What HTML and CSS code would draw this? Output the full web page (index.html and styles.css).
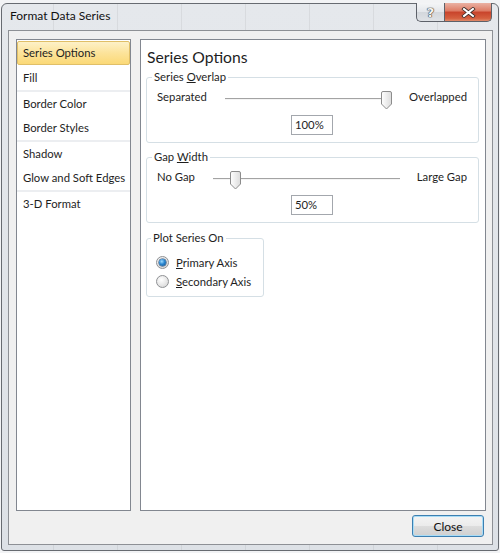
FILE: index.html
```html
<!DOCTYPE html>
<html lang="en">
<head>
  <meta charset="UTF-8">
  <title>Format Data Series</title>
  <link rel="stylesheet" href="styles.css">
</head>
<body>
  <div class="window">
    <div class="titlebar">
      <span class="title">Format Data Series</span>
      <div class="caption">
        <span class="cap-btn help">?</span>
        <span class="cap-btn close">
          <svg width="15" height="11" viewBox="0 0 15 11">
            <path d="M3 2 L12 9 M12 2 L3 9" stroke="#3b2a26" stroke-width="3.6" stroke-linecap="square"/>
            <path d="M3 2 L12 9 M12 2 L3 9" stroke="#ffffff" stroke-width="2" stroke-linecap="square"/>
          </svg>
        </span>
      </div>
    </div>

    <div class="client">
      <div class="main">
        <ul class="nav">
          <li class="item selected">Series Options</li>
          <li class="item">Fill</li>
          <li class="sep"></li>
          <li class="item">Border Color</li>
          <li class="item">Border Styles</li>
          <li class="sep"></li>
          <li class="item">Shadow</li>
          <li class="item">Glow and Soft Edges</li>
          <li class="sep"></li>
          <li class="item">3-D Format</li>
        </ul>

        <div class="panel">
          <h2>Series Options</h2>

          <fieldset class="group">
            <legend>Series <u>O</u>verlap</legend>
            <div class="slider-row">
              <span>Separated</span>
              <div class="track">
                <span class="thumb" style="left: 156px">
                  <svg width="11" height="19" viewBox="0 0 11 19">
                    <defs>
                      <linearGradient id="tg1" x1="0" y1="0" x2="1" y2="0">
                        <stop offset="0" stop-color="#ffffff"/>
                        <stop offset="1" stop-color="#dcdcdc"/>
                      </linearGradient>
                    </defs>
                    <path d="M2 0.5 H9 A1.5 1.5 0 0 1 10.5 2 V13 L5.5 18 L0.5 13 V2 A1.5 1.5 0 0 1 2 0.5 Z" fill="url(#tg1)" stroke="#8c8c8c"/>
                  </svg>
                </span>
              </div>
              <span>Overlapped</span>
            </div>
            <div class="value">100%</div>
          </fieldset>

          <fieldset class="group">
            <legend>Gap <u>W</u>idth</legend>
            <div class="slider-row">
              <span>No Gap</span>
              <div class="track">
                <span class="thumb" style="left: 17px">
                  <svg width="11" height="19" viewBox="0 0 11 19">
                    <defs>
                      <linearGradient id="tg2" x1="0" y1="0" x2="1" y2="0">
                        <stop offset="0" stop-color="#ffffff"/>
                        <stop offset="1" stop-color="#dcdcdc"/>
                      </linearGradient>
                    </defs>
                    <path d="M2 0.5 H9 A1.5 1.5 0 0 1 10.5 2 V13 L5.5 18 L0.5 13 V2 A1.5 1.5 0 0 1 2 0.5 Z" fill="url(#tg2)" stroke="#8c8c8c"/>
                  </svg>
                </span>
              </div>
              <span>Large Gap</span>
            </div>
            <div class="value">50%</div>
          </fieldset>

          <fieldset class="group small">
            <legend>Plot Series On</legend>
            <label class="radio-row"><span class="radio on"></span><span><u>P</u>rimary Axis</span></label>
            <label class="radio-row"><span class="radio"></span><span><u>S</u>econdary Axis</span></label>
          </fieldset>
        </div>
      </div>

      <div class="buttons">
        <button class="btn">Close</button>
      </div>
    </div>
  </div>
</body>
</html>
```

FILE: styles.css
```css
body {
  margin: 0;
  background: #f2f3f5;
  font-family: Lato, "Noto Sans", sans-serif;
  font-size: 11.3px;
  color: #1e1e1e;
}

.window {
  box-sizing: border-box;
  width: 498px;
  height: 548px;
  margin: 3px 0 0 1px;
  border: 1px solid #676b71;
  border-radius: 6px 6px 3px 3px;
  background:
    repeating-linear-gradient(90deg, transparent 0 51px, rgba(0, 0, 0, 0.06) 51px 52px, transparent 52px 64px),
    linear-gradient(#e5e8ec, #dde1e6);
  display: flex;
  flex-direction: column;
}

.titlebar {
  height: 26px;
  display: flex;
  align-items: flex-start;
  padding: 0 6px 0 8px;
}

.title {
  font-size: 12px;
  line-height: 24px;
  color: #111;
}

.caption {
  margin-left: auto;
  margin-top: -1px;
  display: flex;
}

.cap-btn {
  box-sizing: border-box;
  height: 19px;
  border: 1px solid #5d6169;
  border-top: none;
  display: flex;
  align-items: center;
  justify-content: center;
}

.help {
  width: 28px;
  border-right: none;
  border-radius: 0 0 0 5px;
  background: linear-gradient(#f4f5f7, #e3e6ea 50%, #d3d7dc 51%, #dfe2e6);
  font-family: "DejaVu Sans", sans-serif;
  font-weight: bold;
  font-size: 13px;
  color: #f4f4f4;
  text-shadow: 0 0 1px #333, 0 0 1px #333, 0 0 1px #333;
}

.close {
  width: 48px;
  border-radius: 0 0 5px 0;
  background: linear-gradient(#eab1a3, #dd7a63 45%, #c8432b 50%, #d5603f 85%, #e08a6a);
}

.client {
  flex: 1;
  margin: 0 5px 5px 6px;
  border: 1px solid #8d9095;
  background: #f0f0f0;
  padding: 8px 6px 7px 7px;
  display: flex;
  flex-direction: column;
}

.main {
  display: flex;
  gap: 9px;
  height: 472px;
}

.nav {
  box-sizing: border-box;
  width: 115px;
  margin: 0;
  padding: 1px 0 0;
  list-style: none;
  border: 1px solid #828790;
  background: #fff;
}

.item {
  height: 24px;
  line-height: 24px;
  padding-left: 6px;
  white-space: nowrap;
}

.item.selected {
  box-sizing: border-box;
  line-height: 22px;
  padding-left: 5px;
  margin-bottom: 1px;
  border: 1px solid #e0bf68;
  border-radius: 2px;
  background: linear-gradient(#fdf1c8, #fce39a 50%, #fbd977);
}

.sep {
  height: 2px;
  background: #eceef1;
}

.panel {
  flex: 1;
  border: 1px solid #828790;
  background: #fff;
  padding: 6px 6px 0 5px;
}

.panel h2 {
  margin: 0 0 1px 1px;
  font-size: 15.7px;
  font-weight: normal;
  line-height: 22px;
}

.group {
  margin: 6px 0 0;
  padding: 1px 11px 7px 10px;
  border: 1px solid #d5dfe5;
  border-radius: 3px;
}

.group:first-of-type {
  margin-top: 0;
}

.group legend {
  margin-left: -5px;
  padding: 0 2px;
  line-height: 16px;
}

.group.small {
  box-sizing: border-box;
  width: 118px;
  margin-top: 7px;
  padding: 7px 4px 5px 9px;
}

.slider-row {
  display: flex;
  align-items: center;
  height: 20px;
}

.track {
  flex: 1;
  position: relative;
  height: 20px;
  margin: 0 17px 0 18px;
}

.track::before {
  content: "";
  position: absolute;
  left: 0;
  right: 0;
  top: 12px;
  border-top: 1px solid #a3a3a3;
  border-bottom: 1px solid #f4f4f4;
}

.thumb {
  position: absolute;
  top: 5px;
  width: 11px;
  height: 19px;
}

.thumb svg {
  display: block;
}

.value {
  box-sizing: border-box;
  width: 42px;
  height: 20px;
  margin: 9px auto 0;
  padding-left: 3px;
  line-height: 18px;
  border: 1px solid #a3a7ad;
  background: #fff;
}

.radio-row {
  display: flex;
  align-items: center;
  gap: 7px;
  height: 19px;
}

.radio {
  box-sizing: border-box;
  width: 13px;
  height: 13px;
  border-radius: 50%;
  border: 1px solid #8f9194;
  background: radial-gradient(circle at 40% 35%, #ffffff, #e4e4e4 60%, #cfcfcf);
  display: flex;
  align-items: center;
  justify-content: center;
}

.radio.on::after {
  content: "";
  width: 7px;
  height: 7px;
  border-radius: 50%;
  background: radial-gradient(circle at 40% 35%, #9fdcff, #2a86d0 45%, #144f86);
  box-shadow: 0 0 0 0.5px #1d3f66;
}

.buttons {
  display: flex;
  justify-content: flex-end;
  margin-top: 4px;
  padding-right: 2px;
}

.btn {
  box-sizing: border-box;
  width: 72px;
  height: 22px;
  font-family: inherit;
  font-size: 12px;
  color: #111;
  border: 1px solid #3c7fb1;
  border-radius: 3px;
  background: linear-gradient(#f4f4f4, #ebebeb 50%, #dddddd 51%, #cfcfcf);
  box-shadow: inset 0 0 0 1px #a8dcf6;
  padding: 0;
}
```
